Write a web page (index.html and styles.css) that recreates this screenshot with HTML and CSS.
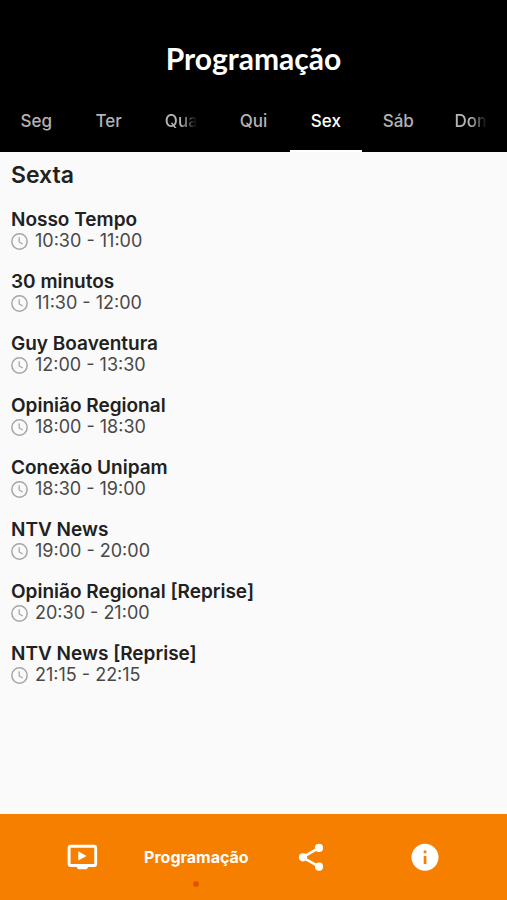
FILE: index.html
```html
<!DOCTYPE html>
<html lang="pt-BR">
<head>
<meta charset="utf-8">
<meta name="viewport" content="width=device-width, initial-scale=1">
<title>Programação</title>
<link rel="stylesheet" href="styles.css">
</head>
<body>
<svg class="defs" aria-hidden="true">
  <symbol id="clock" viewBox="0 0 16 16">
    <circle cx="8" cy="8" r="7.2" fill="none" stroke="currentColor" stroke-width="1.4"/>
    <path d="M7.7 4v4.4l3.3 2" fill="none" stroke="currentColor" stroke-width="1.2"/>
  </symbol>
</svg>
<header class="header">
  <h1 class="title">Programação</h1>
  <div class="tabs" role="tablist">
    <button class="tab" role="tab"><span class="label">Seg</span></button>
    <button class="tab" role="tab"><span class="label">Ter</span></button>
    <button class="tab" role="tab"><span class="label faded">Qua</span></button>
    <button class="tab" role="tab"><span class="label">Qui</span></button>
    <button class="tab active" role="tab" aria-selected="true"><span class="label">Sex</span></button>
    <button class="tab" role="tab"><span class="label">Sáb</span></button>
    <button class="tab" role="tab"><span class="label faded">Dom</span></button>
  </div>
</header>
<main class="content">
  <h2 class="day">Sexta</h2>
  <ul class="shows">
    <li><h3 class="name">Nosso Tempo</h3><p class="time"><svg class="clock"><use href="#clock"/></svg>10:30 - 11:00</p></li>
    <li><h3 class="name">30 minutos</h3><p class="time"><svg class="clock"><use href="#clock"/></svg>11:30 - 12:00</p></li>
    <li><h3 class="name">Guy Boaventura</h3><p class="time"><svg class="clock"><use href="#clock"/></svg>12:00 - 13:30</p></li>
    <li><h3 class="name">Opinião Regional</h3><p class="time"><svg class="clock"><use href="#clock"/></svg>18:00 - 18:30</p></li>
    <li><h3 class="name">Conexão Unipam</h3><p class="time"><svg class="clock"><use href="#clock"/></svg>18:30 - 19:00</p></li>
    <li><h3 class="name">NTV News</h3><p class="time"><svg class="clock"><use href="#clock"/></svg>19:00 - 20:00</p></li>
    <li><h3 class="name">Opinião Regional [Reprise]</h3><p class="time"><svg class="clock"><use href="#clock"/></svg>20:30 - 21:00</p></li>
    <li><h3 class="name">NTV News [Reprise]</h3><p class="time"><svg class="clock"><use href="#clock"/></svg>21:15 - 22:15</p></li>
  </ul>
</main>
<nav class="nav">
  <a class="item" href="#tv" aria-label="Ao vivo">
    <svg class="icon" viewBox="0 0 32 32"><rect x="3.1" y="5.3" width="26.6" height="19.2" rx="1.6" fill="none" stroke="currentColor" stroke-width="2.9"/><path d="M10.8 25h11.2v1.6l-1.4 1.6h-8.4l-1.4-1.6zM12.3 10.2v9.4l8.2-4.7z" fill="currentColor"/></svg>
  </a>
  <a class="item current" href="#programacao" aria-current="page">Programação</a>
  <a class="item" href="#share" aria-label="Compartilhar">
    <svg class="icon" viewBox="0 0 32 32"><path d="M24 6.9 7.5 16.3 24 25.7" fill="none" stroke="currentColor" stroke-width="2.6"/><g fill="currentColor"><circle cx="24" cy="6.9" r="4.1"/><circle cx="8" cy="16.3" r="4.1"/><circle cx="24" cy="25.7" r="4.1"/></g></svg>
  </a>
  <a class="item" href="#info" aria-label="Informações">
    <svg class="icon" viewBox="0 0 32 32"><path fill="currentColor" fill-rule="evenodd" d="M16 2.8a13.5 13.5 0 1 0 0 27a13.5 13.5 0 1 0 0-27zM14.7 9.6h2.7v2.7h-2.7zM14.7 15h2.7v8h-2.7z"/></svg>
  </a>
</nav>
</body>
</html>
```
FILE: styles.css
```css
* { box-sizing: border-box; margin: 0; padding: 0; }
body {
  min-height: 100vh;
  display: flex;
  flex-direction: column;
  background: #fafafa;
  color: #212121;
  font-family: Inter, "Liberation Sans", sans-serif;
}
.defs { display: none; }
.header { background: #000; padding-top: 38px; }
.title {
  color: #fff;
  font: 700 30px/40px Lato, sans-serif;
  text-align: center;
}
.tabs { display: flex; padding-top: 14px; }
.tab {
  flex: 1 1 0;
  min-width: 0;
  height: 60px;
  padding: 0 20px;
  border: 0;
  border-bottom: 2px solid transparent;
  background: none;
  color: #b3b3b3;
  font: 500 17px/24px Inter, sans-serif;
}
.tab.active { color: #fff; border-bottom-color: #fff; }
.label { display: block; white-space: nowrap; }
.faded {
  overflow: hidden;
  text-align: left;
  -webkit-mask-image: linear-gradient(to right, #000 50%, transparent);
  mask-image: linear-gradient(to right, #000 50%, transparent);
}
.content { flex: 1; padding: 8px 11px; }
.day { font-size: 23px; line-height: 30px; font-weight: 600; }
.shows {
  list-style: none;
  display: flex;
  flex-direction: column;
  gap: 20px;
  padding-top: 19px;
}
.name { font-size: 19px; line-height: 22px; font-weight: 600; }
.time {
  display: flex;
  align-items: center;
  gap: 7px;
  color: #484848;
  font-size: 18px;
  line-height: 20px;
}
.clock { width: 17px; height: 17px; color: #a6a6a6; }
.nav {
  display: flex;
  height: 86px;
  padding: 0 25px;
  background: #f77f00;
}
.item {
  position: relative;
  flex: 1 1 0;
  display: flex;
  align-items: center;
  justify-content: center;
  color: #fff;
  text-decoration: none;
  font-size: 16px;
  font-weight: 700;
}
.current::after {
  content: "";
  position: absolute;
  bottom: 13px;
  left: 50%;
  width: 6px;
  height: 6px;
  margin-left: -3px;
  border-radius: 50%;
  background: #e65100;
}
.icon { width: 32px; height: 32px; }
```
